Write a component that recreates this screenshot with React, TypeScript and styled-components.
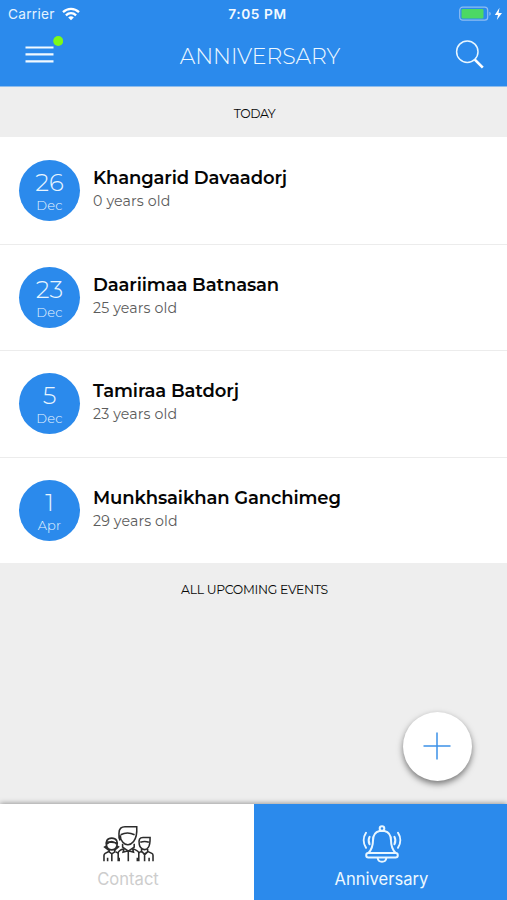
import React from 'react';
import styled, { createGlobalStyle } from 'styled-components';

const BLUE = '#2b8aec';

const GlobalStyle = createGlobalStyle`
  * { box-sizing: border-box; }
  body { margin: 0; background: #eee; }
`;

const Screen = styled.main`
  position: relative;
  display: flex;
  flex-direction: column;
  width: 507px;
  height: 900px;
  overflow: hidden;
  background: #eeeeee;
  color: #050505;
  font-family: Montserrat, Inter, sans-serif;
`;

const Header = styled.header`
  flex: 0 0 87px;
  background: ${BLUE};
  border-bottom: 1px solid #8fbdec;
  color: #fff;
`;

const StatusBar = styled.div`
  display: grid;
  grid-template-columns: 1fr auto 1fr;
  align-items: center;
  height: 27px;
  padding: 0 4px 0 8px;
  font: 400 13.7px/27px Inter, sans-serif;
`;

const Carrier = styled.div`
  display: flex;
  align-items: center;
  gap: 7px;
  letter-spacing: 0.25px;
  color: #e4f3ff;
`;

const Clock = styled.div`
  padding: 1px 0 0 4px;
  font-weight: 600;
  letter-spacing: 0.6px;
  color: #f2faff;
`;

const Power = styled.div`
  display: flex;
  justify-content: flex-end;
`;

const NavBar = styled.div`
  display: grid;
  grid-template-columns: 48px 1fr 32px;
  align-items: center;
  height: 59px;
  padding: 0 20px 0 15px;
`;

const IconButton = styled.button`
  display: flex;
  align-items: center;
  justify-content: center;
  height: 52px;
  padding: 0;
  align-self: start;
  border: 0;
  background: none;
  color: #fff;
`;

const Title = styled.h1`
  margin: 0;
  padding-left: 2px;
  text-align: center;
  font-size: 22px;
  font-weight: 300;
  line-height: 30px;
  letter-spacing: -0.05px;
  color: #eef8ff;
`;

const SectionTitle = styled.h2<{ $spacing: number }>`
  flex: none;
  height: 50px;
  margin: 0;
  padding-left: 2px;
  text-align: center;
  font-size: 12.4px;
  font-weight: 400;
  line-height: 53px;
  letter-spacing: ${(p) => p.$spacing}px;
  color: #080808;
`;

const List = styled.ul`
  flex: none;
  margin: 0;
  padding: 0;
  list-style: none;
  background: #fff;
`;

const Row = styled.li`
  display: flex;
  align-items: center;
  gap: 13px;
  height: 106.5px;
  padding-left: 19px;
  & + & { border-top: 1px solid #ececec; }
`;

const DateBadge = styled.div`
  display: flex;
  flex-direction: column;
  align-items: center;
  width: 61px;
  height: 61px;
  padding-top: 8px;
  border-radius: 50%;
  background: ${BLUE};
  color: #e8f5ff;
`;

const Day = styled.span`
  font-size: 24.5px;
  font-weight: 300;
  line-height: 29px;
`;

const Month = styled.span`
  font-size: 13px;
  font-weight: 300;
  line-height: 17px;
  letter-spacing: 0.2px;
`;

const Person = styled.div`
  padding-bottom: 3px;
`;

const Name = styled.div`
  font-size: 18px;
  font-weight: 600;
  line-height: 25px;
  letter-spacing: -0.13px;
`;

const Age = styled.div`
  font-size: 14.2px;
  line-height: 21px;
  letter-spacing: 0.13px;
  color: #5c5c5c;
`;

const AddButton = styled.button`
  position: absolute;
  top: 712px;
  left: 403px;
  display: flex;
  align-items: center;
  justify-content: center;
  width: 69px;
  height: 69px;
  padding: 0 1px 1px 0;
  border: 0;
  border-radius: 50%;
  background: #fff;
  box-shadow: 0 3px 6px rgba(0, 0, 0, 0.5);
`;

const TabBar = styled.nav`
  display: grid;
  grid-template-columns: 254px 1fr;
  height: 96px;
  margin-top: auto;
  box-shadow: 0 -1px 5px rgba(0, 0, 0, 0.35);
`;

const Tab = styled.button<{ $active?: boolean }>`
  display: flex;
  flex-direction: column;
  align-items: center;
  padding: 18px 0 0 2px;
  border: 0;
  background: ${(p) => (p.$active ? BLUE : '#fff')};
  color: ${(p) => (p.$active ? '#edf8ff' : '#cdcdcd')};
  font: 400 16.6px/24px Inter, sans-serif;
  letter-spacing: 0;
`;

const TabIcon = styled.svg`
  display: block;
  margin-bottom: 3px;
`;

const people = [
  { day: '26', month: 'Dec', name: 'Khangarid Davaadorj', age: 0 },
  { day: '23', month: 'Dec', name: 'Daariimaa Batnasan', age: 25 },
  { day: '5', month: 'Dec', name: 'Tamiraa Batdorj', age: 23 },
  { day: '1', month: 'Apr', name: 'Munkhsaikhan Ganchimeg', age: 29 },
];

const WifiIcon = () => (
  <svg width="18" height="14" viewBox="0 0 18 14" fill="none" stroke="#fff" strokeWidth="2.3">
    <path d="M1 5.1C5.6.8 12.4.8 17 5.1" />
    <path d="M3.9 8.3c3-2.8 7.2-2.8 10.2 0" />
    <path d="M9 13.2 6.2 10.4c1.7-1.5 3.9-1.5 5.6 0z" fill="#fff" stroke="none" />
  </svg>
);

const BatteryIcon = () => (
  <svg width="44" height="16" viewBox="0 0 44 16">
    <rect x=".7" y="1.2" width="28" height="13" rx="3" fill="none" stroke="#8fbdf2" strokeWidth="1.2" />
    <rect x="2.5" y="3" width="22" height="9.4" rx="1" fill="#4cd864" />
    <path d="M30.3 5.7c2 .8 2 3.3 0 4.1z" fill="#8fbdf2" />
    <path d="M40.5 1.7 35.8 9h3.2l-1.2 5.1L43 7h-3.4z" fill="#fff" />
  </svg>
);

const MenuIcon = () => (
  <svg width="48" height="36" viewBox="0 0 48 36" fill="none">
    <path d="M10.5 12.5h28M10.5 19.3h28M10.5 26.3h28" stroke="#f2faff" strokeWidth="2.2" />
    <circle cx="43.2" cy="6" r="5" fill="#7dfa18" />
  </svg>
);

const SearchIcon = () => (
  <svg width="32" height="32" viewBox="0 0 32 32" fill="none" stroke="#e8f6ff">
    <circle cx="12.3" cy="14.7" r="10.7" strokeWidth="1.5" />
    <path d="m19.8 22.6 8 8" stroke="#fff" strokeWidth="2.6" />
  </svg>
);

const ContactIcon = () => (
  <TabIcon width="51" height="42" viewBox="0 0 52 42" fill="none" stroke="#2c2c2c" strokeWidth="1.6">
    <path d="M17.5 18.5c-2-2.6-1.3-5.4-1.1-8.2.2-3.7 2.2-5.8 6-5.8h12c.4 6.8-.1 11.2-3.2 15-3.3 4.1-8 4.5-11.2.6-1.6-1.9-2.4-4.5-2.4-7.1M18 12.6c4.8-2.5 9-2.5 14.2 0" />
    <path d="M20 21.7v3.5l5.8 4 6-4v-3.5M21.5 26.4l-1 3.9 5.3-1.4 5.3 1.4-1-3.9M15.5 39.5V31c0-1.7 2-2.5 5-4M31 27c3 1.5 5.5 2.3 5.5 4v8.5M25.8 29v10.5M16.5 36v3.5M35 36v3.5" />
    <path d="M3.7 24.2c-1.4-4.4.3-8.2 5.2-8.2s6.6 3.8 5.2 8.2c-.9 2.5-2.9 3.8-5.2 3.8s-4.3-1.3-5.2-3.8zM4 22c3.1-3.1 6.7-3.1 9.8 0M4 19.8l9.6 1M3.5 24l-1.8 1.2 4.4 3.2M14.2 24l1.6 1-4 3.4" />
    <path d="M6.3 27v3l2.7 2 3-2v-3M6 29.6l-3.8 2c-.8.5-1.2 1.3-1.2 2.2v5.7M4.7 36v3.5M9 32v7.5M13 30l2.5 1.3" />
    <path d="M37 22.4c-.9-4.7.3-7 3.8-7H48c.1 4.9.2 7.1-1.8 10.1-2 3-5.7 3-7.8.1-.8-1-1.2-2.1-1.4-3.2M38 20.3c3.1-1.2 6-1.2 8.8 0" />
    <path d="M39.3 27v3l3.1 2 3.1-2v-3M38.8 29.8l-3 1.3M46 29.8l3.8 1.8c.8.4 1.2 1.2 1.2 2.2v5.7M42.4 32v7.5M47 36v3.5M40 30l2.4 3 3-3" />
  </TabIcon>
);

const BellIcon = () => (
  <TabIcon width="42" height="42" viewBox="0 0 42 42" fill="none" stroke="#e8f6ff" strokeWidth="2" strokeLinecap="round">
    <circle cx="21" cy="6.5" r="2.3" />
    <path d="M18.5 9c-4.3 1-6.5 4.4-6.5 9.5 0 6.5-1.4 9-4.5 12.5h27c-3.1-3.5-4.5-6-4.5-12.5 0-5.1-2.2-8.5-6.5-9.5z" />
    <rect x="5.2" y="31" width="31.6" height="4.5" rx="2.2" />
    <path d="M16.7 36c.5 5 8.1 5 8.6 0M8.6 14.8c-1.3 2.3-1.3 5.1 0 7.4M5 10.8c-3 4.5-3 10.5 0 15M33.4 14.8c1.3 2.3 1.3 5.1 0 7.4M37 10.8c3 4.5 3 10.5 0 15" />
  </TabIcon>
);

export default function App() {
  return (
    <Screen>
      <GlobalStyle />
      <Header>
        <StatusBar>
          <Carrier>Carrier <WifiIcon /></Carrier>
          <Clock>7:05 PM</Clock>
          <Power><BatteryIcon /></Power>
        </StatusBar>
        <NavBar>
          <IconButton aria-label="Menu"><MenuIcon /></IconButton>
          <Title>ANNIVERSARY</Title>
          <IconButton aria-label="Search"><SearchIcon /></IconButton>
        </NavBar>
      </Header>
      <SectionTitle $spacing={-0.4}>TODAY</SectionTitle>
      <List>
        {people.map((p) => (
          <Row key={p.name}>
            <DateBadge>
              <Day>{p.day}</Day>
              <Month>{p.month}</Month>
            </DateBadge>
            <Person>
              <Name>{p.name}</Name>
              <Age>{p.age} years old</Age>
            </Person>
          </Row>
        ))}
      </List>
      <SectionTitle $spacing={-0.28}>ALL UPCOMING EVENTS</SectionTitle>
      <AddButton aria-label="Add event">
        <svg width="28" height="28" viewBox="0 0 28 28" stroke="#3c91e8" strokeWidth="1.5">
          <path d="M14 .5v27M.5 14h27" />
        </svg>
      </AddButton>
      <TabBar>
        <Tab><ContactIcon />Contact</Tab>
        <Tab $active><BellIcon />Anniversary</Tab>
      </TabBar>
    </Screen>
  );
}
